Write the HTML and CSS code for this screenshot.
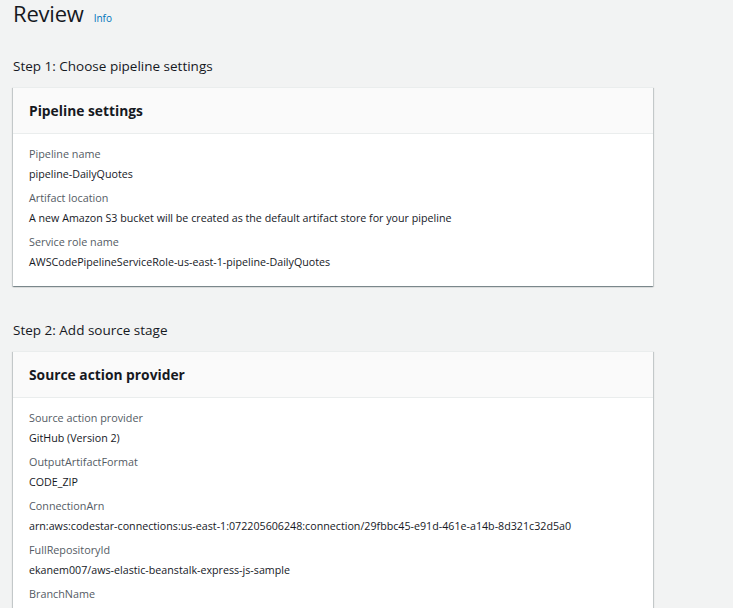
FILE: index.html
```html
<!DOCTYPE html>
<html>
<head>
<meta charset="utf-8">
<link rel="stylesheet" href="styles.css">
</head>
<body>
<div class="page">
  <div class="title-row">
    <h1 class="title">Review</h1>
    <a class="info" href="#">Info</a>
  </div>

  <h2 class="step">Step 1: Choose pipeline settings</h2>
  <section class="card">
    <header class="card-head">Pipeline settings</header>
    <div class="card-body">
      <div class="field"><div class="label">Pipeline name</div><div class="value">pipeline-DailyQuotes</div></div>
      <div class="field"><div class="label">Artifact location</div><div class="value">A new Amazon S3 bucket will be created as the default artifact store for your pipeline</div></div>
      <div class="field"><div class="label">Service role name</div><div class="value">AWSCodePipelineServiceRole-us-east-1-pipeline-DailyQuotes</div></div>
    </div>
  </section>

  <h2 class="step step2">Step 2: Add source stage</h2>
  <section class="card">
    <header class="card-head">Source action provider</header>
    <div class="card-body">
      <div class="field"><div class="label">Source action provider</div><div class="value">GitHub (Version 2)</div></div>
      <div class="field"><div class="label">OutputArtifactFormat</div><div class="value">CODE_ZIP</div></div>
      <div class="field"><div class="label">ConnectionArn</div><div class="value">arn:aws:codestar-connections:us-east-1:072205606248:connection/29fbbc45-e91d-461e-a14b-8d321c32d5a0</div></div>
      <div class="field"><div class="label">FullRepositoryId</div><div class="value">ekanem007/aws-elastic-beanstalk-express-js-sample</div></div>
      <div class="field"><div class="label">BranchName</div><div class="value">main</div></div>
    </div>
  </section>
</div>
</body>
</html>
```
FILE: styles.css
```css
html, body {
  margin: 0;
  padding: 0;
  background: #f2f3f3;
}
body {
  font-family: "Open Sans", "Noto Sans", sans-serif;
  color: #16191f;
}
.page {
  width: 640px;
  padding: 0 0 0 13px;
}
.title-row {
  display: flex;
  align-items: baseline;
  gap: 10px;
  height: 30px;
}
.title {
  margin: 0;
  font-size: 22px;
  font-weight: 400;
  line-height: 26px;
  letter-spacing: -0.2px;
}
.info {
  font-size: 10px;
  color: #0073bb;
  text-decoration: none;
  font-weight: 400;
}
.step {
  margin: 25px 0 0;
  font-size: 13.5px;
  font-weight: 400;
  line-height: 22px;
  height: 32px;
}
.step2 {
  margin-top: 33px;
}
.card {
  background: #fff;
  box-shadow: 0 1px 1px 0 rgba(0,28,36,.3), 1px 1px 1px 0 rgba(0,28,36,.15), -1px 1px 1px 0 rgba(0,28,36,.15);
  border-top: 1px solid #eaeded;
}
.card-head {
  background: #fafafa;
  border-bottom: 1px solid #eaeded;
  height: 45px;
  line-height: 45px;
  padding: 0 16px;
  font-size: 13.8px;
  font-weight: 700;
}
.card-body {
  padding: 10px 16px 10px;
}
.field {
  padding-bottom: 4px;
}
.label {
  color: #545b64;
  font-size: 10.8px;
  line-height: 20px;
}
.value {
  line-height: 20px;
  font-size: 10.7px;
}
```
